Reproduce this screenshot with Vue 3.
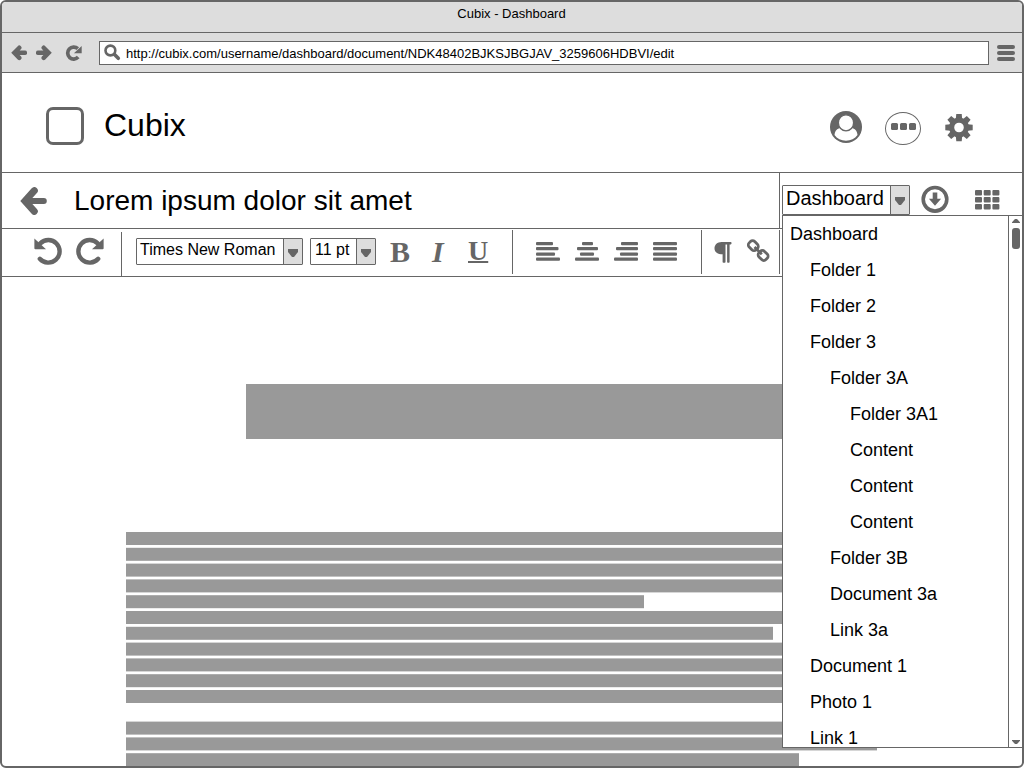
<script setup>
const rows = [
  ['Dashboard', 0], ['Folder 1', 1], ['Folder 2', 1], ['Folder 3', 1],
  ['Folder 3A', 2], ['Folder 3A1', 3], ['Content', 3], ['Content', 3], ['Content', 3],
  ['Folder 3B', 2], ['Document 3a', 2], ['Link 3a', 2],
  ['Document 1', 1], ['Photo 1', 1], ['Link 1', 1],
]
// Placeholder text lines: [line number, width]
const lines = [
  [0, 780], [1, 780], [2, 780], [3, 780], [4, 518], [5, 780], [6, 647], [7, 780],
  [8, 780], [9, 780], [10, 780], [12, 780], [13, 751], [14, 673],
]
const aligns = [
  [[0, 17], [0, 22.5], [0, 19], [0, 24]],
  [[7, 11], [2, 21], [5, 14], [0, 24]],
  [[7, 17], [2, 22], [6, 18], [0, 24]],
  [[0, 24], [0, 24], [0, 24], [0, 24]],
]
</script>

<template>
  <div class="window">
    <div class="titlebar">Cubix - Dashboard</div>
    <div class="navbar">
      <svg class="nav" width="16" height="16" viewBox="0 0 16 16"><path d="M8.300 2.700 3.300 7.800l5 5.100M4 7.800h9.900" /></svg>
      <svg class="nav fwd" width="16" height="16" viewBox="0 0 16 16"><path d="M7.700 2.700l5 5.100-5 5.100M12 7.800H2.100" /></svg>
      <svg class="reload" width="17" height="16" viewBox="0 0 17 16">
        <path class="ring" d="M13.200 12.100A6 6 0 1 1 12.800 3.700" /><path class="solid" d="M16.700 1v7.300H8.900z" />
      </svg>
      <div class="url">
        <svg width="17" height="17" viewBox="0 0 17 17"><circle cx="6.400" cy="6.500" r="4.900" /><path d="M10.300 10.300l4 4" /></svg>
        <span>http://cubix.com/username/dashboard/document/NDK48402BJKSJBGJAV_3259606HDBVI/edit</span>
      </div>
      <div class="burger"><i></i><i></i><i></i></div>
    </div>

    <header class="header">
      <div class="logo"></div>
      <div class="brand">Cubix</div>
      <svg class="user" width="32" height="32" viewBox="0 0 32 32">
        <circle class="solid" cx="16" cy="16" r="16" />
        <path class="hole" d="M9.200 17.200c3 0 3.500 2.500 6.800 2.500s3.800-2.500 6.800-2.500c3 .8 4.500 3.600 4.700 6.900-2.600 3.600-6.700 5.700-11.500 5.700s-8.900-2.100-11.500-5.700c.2-3.300 1.700-6.100 4.700-6.900z" />
        <ellipse cx="16" cy="11.800" rx="7.600" ry="8" fill="#fff" stroke="#666" stroke-width="1.300" />
      </svg>
      <div class="more"><i></i><i></i><i></i></div>
      <svg class="gear" width="28" height="28" viewBox="-14 -13.500 28 28">
        <circle r="7.400" fill="none" stroke="#666" stroke-width="5.200" />
        <path v-for="n in 8" :key="n" class="solid" :transform="`rotate(${n * 45})`" d="M-3.200-8.500l.5-5.200h5.400l.5 5.200z" />
      </svg>
    </header>

    <div class="docbar">
      <svg class="back" width="28" height="28" viewBox="0 0 28 28"><path d="M14.300 3.700 5 14l9.300 10.300" /><path class="shaft" d="M6 14h17.800" /></svg>
      <div class="doctitle">Lorem ipsum dolor sit amet</div>
      <div class="side">
        <div class="select place"><span>Dashboard</span><b><svg width="12" height="8" viewBox="0 0 12 8"><path d="M1 0h10v3L7 8H5L1 3z" /></svg></b></div>
        <svg class="download" width="28" height="28" viewBox="0 0 28 28">
          <circle cx="14" cy="14.300" r="11.800" /><path class="solid" d="M11.700 7.500h4.600v6.300h3.800L14 20.800 7.900 13.800h3.800z" />
        </svg>
        <svg class="grid" width="25" height="20" viewBox="0 0 25 20">
          <rect v-for="n in 9" :key="n" :x="((n - 1) % 3) * 8.700" :y="Math.floor((n - 1) / 3) * 7" width="7" height="5.400" rx="1" />
        </svg>
      </div>
    </div>

    <div class="toolbar">
      <div class="group history">
        <svg width="28" height="28" viewBox="0 0 28 28"><path class="ring" d="M5.800 21.800A11.300 11.300 0 1 0 6.300 6.400" /><path class="solid" d="M.4 1.500 12 12.300H1.400q-1 0-1-1z" /></svg>
        <svg class="redo" width="28" height="28" viewBox="0 0 28 28"><path class="ring" d="M5.800 21.800A11.300 11.300 0 1 0 6.300 6.400" /><path class="solid" d="M.4 1.500 12 12.300H1.400q-1 0-1-1z" /></svg>
      </div>
      <div class="group fonts">
        <div class="select family"><span>Times New Roman</span><b><svg width="12" height="8" viewBox="0 0 12 8"><path d="M1 0h10v3L7 8H5L1 3z" /></svg></b></div>
        <div class="select size"><span>11 pt</span><b><svg width="12" height="8" viewBox="0 0 12 8"><path d="M1 0h10v3L7 8H5L1 3z" /></svg></b></div>
        <div class="style bold">B</div>
        <div class="style italic">I</div>
        <div class="style under">U</div>
      </div>
      <div class="group aligns">
        <svg v-for="(a, k) in aligns" :key="k" width="25" height="19" viewBox="0 0 25 19">
          <rect v-for="(r, j) in a" :key="j" :x="r[0]" :y="[0, 5, 10.500, 15.500][j]" :width="r[1]" height="3.300" rx="1" />
        </svg>
      </div>
      <div class="group extras">
        <svg width="18" height="22" viewBox="0 0 18 22"><path class="solid" d="M7.500 0h9.200q.8 0 .8.800v.8q0 .8-.8.800H15.600V20q0 .8-.8.800h-.9q-.8 0-.8-.8V2.400h-1.600V20q0 .8-.8.800h-1.300q-.8 0-.8-.8V12.300C3.800 12.300.5 10 .5 6.400S3.400 0 7.500 0z" /></svg>
        <svg class="link" width="24" height="24" viewBox="0 0 24 24">
          <rect x="-4.900" y="-3.900" width="9.800" height="7.800" rx="3" transform="translate(6.300 6.700) rotate(45)" />
          <rect x="-4.900" y="-3.900" width="9.800" height="7.800" rx="3" transform="translate(16.100 16.500) rotate(45)" />
          <path d="M7.500 7.900l7.300 7.300" />
        </svg>
      </div>
    </div>

    <main class="page">
      <div class="heading"></div>
      <svg class="text" width="800" height="234" viewBox="0 0 800 234">
        <rect v-for="l in lines" :key="l[0]" x="0" :y="l[0] * 15.800" :width="l[1]" height="13" />
      </svg>
    </main>

    <div class="menu">
      <ul>
        <li v-for="(r, k) in rows" :key="k" :class="'level' + r[1]">{{ r[0] }}</li>
      </ul>
      <div class="scroll">
        <svg width="8" height="4" viewBox="0 0 8 4"><path d="M0 4V3.200L3 0h2l3 3.200V4z" /></svg>
        <div class="thumb"></div>
        <svg class="down" width="8" height="4" viewBox="0 0 8 4"><path d="M0 0v.8L3 4h2l3-3.200V0z" /></svg>
      </div>
    </div>
  </div>
</template>

<style>
body { background: #fff; overflow: hidden; }
</style>

<style scoped>
* { box-sizing: border-box; }
.window { position: relative; width: 1024px; height: 768px; border: 2px solid #666; border-radius: 6px; overflow: hidden; background: #fff; color: #000; font-family: "Liberation Sans", Arial, sans-serif; display: flex; flex-direction: column; }
svg { display: block; flex: none; }
.solid { fill: #666; }
.titlebar { height: 31px; flex: none; background: #ddd; border-bottom: 1px solid #666; text-align: center; font-size: 13px; line-height: 24px; padding-right: 1px; }
.navbar { height: 40px; flex: none; background: #ddd; border-bottom: 1px solid #666; display: flex; align-items: center; padding-left: 9px; }
.nav path { fill: none; stroke: #666; stroke-width: 4.4; stroke-linejoin: miter; stroke-linecap: round; }
.fwd { margin-left: 9px; }
.reload { margin-left: 13px; }
.ring { fill: none; stroke: #666; stroke-width: 3.7; }
.url { margin-left: 17px; width: 890px; height: 24px; border: 1px solid #666; background: #fff; display: flex; align-items: center; padding-left: 4px; font-size: 13px; }
.url svg { margin-top: -1px; fill: none; stroke: #666; stroke-width: 2.6; stroke-linecap: round; }
.url path { stroke-width: 3.6; }
.url span { margin: 2px 0 0 5px; }
.burger { margin: 1px 0 0 8px; width: 18px; display: grid; gap: 2px; }
.burger i { height: 4px; background: #666; border-radius: 2px; }
.header { height: 100px; flex: none; border-bottom: 1px solid #666; display: flex; align-items: flex-start; padding-left: 44px; }
.logo { width: 38px; height: 38px; margin-top: 34px; border: 3px solid #666; border-radius: 7px; flex: none; }
.brand { margin: 33px 0 0 20px; width: 726px; flex: none; font-size: 32px; line-height: 38px; }
.user { margin-top: 38px; }
.hole { fill: #fff; }
.more { margin: 39px 0 0 23px; width: 36px; height: 33px; border: 1px solid #666; border-radius: 50%; display: flex; justify-content: center; gap: 2px; padding-top: 10px; flex: none; }
.more i { width: 7px; height: 7px; background: #666; border-radius: 1.5px; }
.gear { margin: 41px 0 0 24px; }
.docbar { height: 56px; flex: none; border-bottom: 1px solid #666; display: flex; align-items: center; padding-left: 18px; }
.back { fill: none; stroke: #666; stroke-width: 7; stroke-linecap: round; stroke-linejoin: miter; }
.shaft { stroke-width: 6; }
.doctitle { margin-left: 26px; width: 705px; flex: none; font-size: 28px; line-height: 32px; }
.side { height: 55px; border-left: 1px solid #666; padding: 12px 0 0 2px; display: flex; align-items: flex-start; flex: none; }
.select { border: 1px solid #666; display: flex; background: #fff; white-space: nowrap; border-radius: 1px; }
.select span { flex: 1; padding-left: 3px; }
.select b { width: 19px; border-left: 1px solid #666; background: #ddd; display: flex; justify-content: center; }
.select b svg { fill: #666; }
.place { width: 128px; height: 30px; font-size: 20px; line-height: 25px; }
.place b svg { margin-top: 11px; }
.download { margin-left: 11px; fill: none; stroke: #666; stroke-width: 3.6; }
.download path { stroke: none; fill: #666; }
.grid { margin: 5px 0 0 26px; fill: #666; }
.toolbar { position: relative; width: 1021px; height: 48px; flex: none; border-bottom: 1px solid #666; display: flex; }
.group { display: flex; align-items: flex-start; border-right: 1px solid #666; height: 44px; margin-top: 1px; flex: none; }
.history { width: 120px; padding: 5px 0 0 32px; gap: 14px; height: 44px; margin-top: 3px; }
.history .ring { stroke-width: 4.4; stroke-linecap: round; }
.redo { transform: scaleX(-1); }
.fonts { width: 391px; padding-left: 14px; }
.family, .size { height: 27px; margin-top: 8px; font-size: 16px; line-height: 21px; }
.family { width: 167px; }
.size { width: 66px; margin-left: 7px; }
.size span { padding-left: 4px; }
.family b svg, .size b svg { margin-top: 10px; }
.style { color: #666; font-family: "Liberation Serif", serif; font-size: 30px; line-height: 32px; font-weight: bold; margin-top: 6px; flex: none; }
.bold { margin-left: 14px; width: 42px; }
.italic { font-style: italic; width: 36px; }
.under { font-size: 28px; margin-top: 5px; text-decoration: underline; text-decoration-thickness: 2px; text-underline-offset: 1px; }
.aligns { width: 189px; padding: 12px 0 0 23px; gap: 14px; fill: #666; }
.extras { width: 78px; padding: 12px 0 0 12px; }
.link { margin: -3px 0 0 15px; fill: none; stroke: #666; stroke-width: 2.8; }
.page { flex: 1; min-height: 0; padding-top: 107px; }
.heading { width: 600px; height: 55px; margin-left: 244px; background: #999; }
.text { margin: 93px 0 0 124px; fill: #999; }
.menu { position: absolute; left: 780px; top: 213px; width: 241px; height: 533px; border: 1px solid #666; background: #fff; display: flex; overflow: hidden; }
.menu ul { list-style: none; margin: 0; padding: 0; width: 225px; }
.menu li { height: 36px; line-height: 36px; font-size: 18px; padding-left: 7px; }
.menu .level1 { padding-left: 27px; }
.menu .level2 { padding-left: 47px; }
.menu .level3 { padding-left: 67px; }
.scroll { width: 14px; border-left: 1px solid #666; display: flex; flex-direction: column; align-items: center; padding: 3px 0; fill: #666; }
.thumb { width: 8px; height: 21px; margin-top: 5px; border-radius: 3px; background: #666; }
.down { margin-top: auto; }
</style>
